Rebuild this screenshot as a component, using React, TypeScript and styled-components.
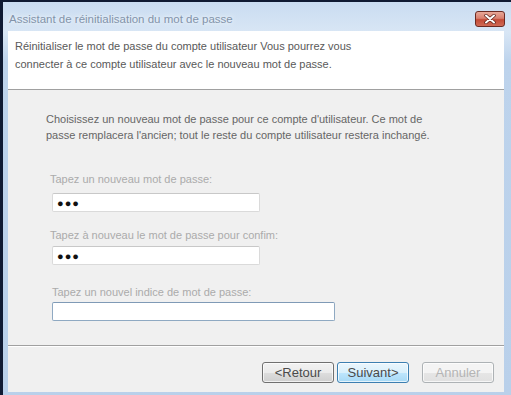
import React from "react";
import styled, { createGlobalStyle } from "styled-components";

const Global = createGlobalStyle`
  html, body { margin: 0; padding: 0; background: #0f1a33; }
  body { font-family: "Liberation Sans", Arial, sans-serif; }
  #root { width: 511px; height: 395px; overflow: hidden; }
`;

const Frame = styled.div`
  width: 508px;
  height: 393px;
  margin: 2px 0 0 3px;
  background: linear-gradient(180deg, #c9dcf1 0px, #d8e6f5 30px, #bdd3ec 60px, #b9d0ea 100%);
  display: flex;
  flex-direction: column;
  padding: 0 7px 3px 5px;
  box-sizing: border-box;
`;

const TitleBar = styled.div`
  height: 29px;
  display: flex;
  align-items: center;
  justify-content: space-between;
  padding: 0 0 0 1px;
`;

const Title = styled.span`
  font-size: 11.5px;
  color: #8293a9;
  text-shadow: 0 0 6px #eef5fd, 0 0 3px #eef5fd;
  margin-top: 4px;
`;

const CloseBtn = styled.div`
  width: 30px;
  height: 16px;
  margin-top: 5px;
  margin-right: -1px;
  box-sizing: border-box;
  border: 1px solid #6b2a22;
  border-radius: 3px;
  background: linear-gradient(180deg, #e8a898 0%, #d88070 45%, #c34a36 55%, #d06a55 100%);
  display: flex;
  align-items: center;
  justify-content: center;
`;

const Client = styled.div`
  flex: 1;
  display: flex;
  flex-direction: column;
  background: #f0f0f0;
`;

const Header = styled.div`
  height: 59px;
  background: #ffffff;
  border-bottom: 1px solid #a0a0a0;
  padding: 6px 0 0 7px;
  box-sizing: border-box;
  font-size: 11px;
  line-height: 18px;
  color: #595959;
`;

const Body = styled.div`
  flex: 1;
  padding: 21px 0 0 38px;
  display: flex;
  flex-direction: column;
  border-bottom: 1px solid #a0a0a0;
`;

const Intro = styled.p`
  margin: 0;
  font-size: 11px;
  line-height: 16px;
  color: #666666;
`;

const Field = styled.div<{ $top: number }>`
  display: flex;
  flex-direction: column;
  align-items: flex-start;
  margin-top: ${(p) => p.$top}px;
  padding-left: 4px;
`;

const Label = styled.label<{ $shift?: number; $gap: number }>`
  font-size: 11px;
  line-height: 14px;
  color: #ababab;
  padding-left: ${(p) => p.$shift ?? 0}px;
  margin-bottom: ${(p) => p.$gap}px;
`;

const Input = styled.div<{ $w: number; $focus?: boolean }>`
  width: ${(p) => p.$w}px;
  height: 19px;
  margin-left: 2px;
  box-sizing: border-box;
  background: #ffffff;
  border: 1px solid ${(p) => (p.$focus ? "#8fa9c2" : "#dadada")};
  border-top-color: ${(p) => (p.$focus ? "#7f9ab6" : "#c8c8c8")};
  border-radius: 2px;
  display: flex;
  align-items: center;
  padding-left: 4px;
  font-size: 11px;
  letter-spacing: 1px;
  color: #111;
`;

const Footer = styled.div`
  height: 46px;
  display: flex;
  align-items: flex-start;
  padding: 15px 0 0 254px;
  box-sizing: border-box;
  border-top: 1px solid #ffffff;
`;

const Button = styled.div<{ $kind?: "default" | "disabled" }>`
  width: 72px;
  height: 21px;
  box-sizing: border-box;
  border-radius: 3px;
  display: flex;
  align-items: center;
  justify-content: center;
  font-size: 13px;
  margin-right: ${(p) => (p.$kind === "default" ? 13 : 3)}px;
  border: 1px solid
    ${(p) => (p.$kind === "default" ? "#3c7fb1" : p.$kind === "disabled" ? "#adb2b5" : "#707070")};
  color: ${(p) => (p.$kind === "disabled" ? "#b4b4b4" : "#4a4a4a")};
  background: ${(p) =>
    p.$kind === "default"
      ? "linear-gradient(180deg, #eaf6fd 0%, #d9f0fc 50%, #bee6fd 51%, #a7d9f5 100%)"
      : p.$kind === "disabled"
      ? "linear-gradient(180deg, #f4f4f4 0%, #f4f4f4 50%, #e6e6e6 51%, #e0e0e0 100%)"
      : "linear-gradient(180deg, #f2f2f2 0%, #ebebeb 50%, #dddddd 51%, #cfcfcf 100%)"};
  box-shadow: inset 0 0 0 1px rgba(255, 255, 255, 0.7);
`;

export default function App() {
  return (
    <>
      <Global />
      <Frame>
        <TitleBar>
          <Title>Assistant de réinitialisation du mot de passe</Title>
          <CloseBtn>
            <svg width="12" height="10" viewBox="0 0 12 10">
              <path d="M2 1.5 L10 8.5 M10 1.5 L2 8.5" stroke="#5a2018" strokeWidth="3.4" strokeLinecap="round" />
              <path d="M2 1.5 L10 8.5 M10 1.5 L2 8.5" stroke="#ffffff" strokeWidth="2" strokeLinecap="round" />
            </svg>
          </CloseBtn>
        </TitleBar>
        <Client>
          <Header>
            Réinitialiser le mot de passe du compte utilisateur Vous pourrez vous
            <br />
            connecter à ce compte utilisateur avec le nouveau mot de passe.
          </Header>
          <Body>
            <Intro>
              Choisissez un nouveau mot de passe pour ce compte d'utilisateur. Ce mot de
              <br />
              passe remplacera l'ancien; tout le reste du compte utilisateur restera inchangé.
            </Intro>
            <Field $top={29}>
              <Label $gap={7}>Tapez un nouveau mot de passe:</Label>
              <Input $w={208}>●●●</Input>
            </Field>
            <Field $top={16}>
              <Label $gap={4}>Tapez à nouveau le mot de passe pour confim:</Label>
              <Input $w={208}>●●●</Input>
            </Field>
            <Field $top={20}>
              <Label $shift={2} $gap={3}>Tapez un nouvel indice de mot de passe:</Label>
              <Input $w={283} $focus />
            </Field>
          </Body>
          <Footer>
            <Button>&lt;Retour</Button>
            <Button $kind="default">Suivant&gt;</Button>
            <Button $kind="disabled">Annuler</Button>
          </Footer>
        </Client>
      </Frame>
    </>
  );
}
